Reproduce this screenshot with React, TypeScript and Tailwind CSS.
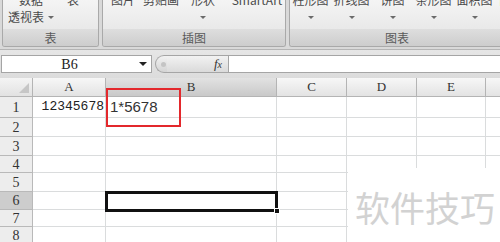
import React from 'react';

const cjk = { fontFamily: '"Noto Sans CJK SC", "Noto Sans", sans-serif' };
const serif = { fontFamily: '"Liberation Serif", "Noto Sans CJK SC", serif' };

const columns = [
  { label: 'A', w: 'w-[73px]', sel: false },
  { label: 'B', w: 'w-[171px]', sel: true },
  { label: 'C', w: 'w-[70px]', sel: false },
  { label: 'D', w: 'w-[70px]', sel: false },
  { label: 'E', w: 'w-[69px]', sel: false },
  { label: '', w: 'w-[40px]', sel: false },
];

const rows = [
  { n: 1, h: 'h-[21px]' },
  { n: 2, h: 'h-[19px]' },
  { n: 3, h: 'h-[19px]' },
  { n: 4, h: 'h-[17px]' },
  { n: 5, h: 'h-[19px]' },
  { n: 6, h: 'h-[18px]' },
  { n: 7, h: 'h-[17px]' },
  { n: 8, h: 'h-[18px]' },
];

function Arrow() {
  return <span className="inline-block w-0 h-0 border-l-[3px] border-r-[3px] border-t-[3px] border-l-transparent border-r-transparent border-t-[#6a6a6a]" />;
}

function RibbonButton({ w, top, bottom, arrow }: { w: string; top: string; bottom?: string; arrow?: boolean }) {
  return (
    <div className={`${w} flex flex-col items-center shrink-0`}>
      <div className="h-[12px] leading-[12px] -mt-[6px] whitespace-nowrap">{top}</div>
      <div className="h-[12px] mt-[5px] flex items-center gap-[4px] leading-[12px] whitespace-nowrap">
        {bottom && <span>{bottom}</span>}
        {arrow && <Arrow />}
      </div>
    </div>
  );
}

function Group({ w, label, children, last }: { w: string; label: string; children: React.ReactNode; last?: boolean }) {
  return (
    <div className={`${w} shrink-0 flex flex-col border border-t-0 border-[#a9a9a9] ${last ? 'border-r-0 rounded-bl-[3px]' : 'rounded-b-[3px]'} overflow-hidden`}>
      <div className="h-[30px] bg-gradient-to-b from-[#f4f4f4] to-[#e9e9e9] flex overflow-hidden">{children}</div>
      <div className="h-[17px] bg-gradient-to-b from-[#dedede] to-[#cdcdcd] flex items-center justify-center text-[#5a5a5a] text-[12px]">
        {label}
      </div>
    </div>
  );
}

export default function App() {
  return (
    <div className="w-[500px] h-[242px] overflow-hidden bg-white relative text-[12px] text-[#4a4a4a]" style={cjk}>
      {/* Ribbon */}
      <div className="h-[50px] bg-[#d9d9d9] flex gap-[3px] pl-[2px] pb-[2px] border-b border-[#b5b5b5]">
        <Group w="w-[97px]" label="表">
          <div className="w-[4px] shrink-0" />
          <RibbonButton w="w-[48px]" top="数据" bottom="透视表" arrow />
          <RibbonButton w="w-[36px]" top="表" />
        </Group>
        <Group w="w-[184px]" label="插图">
          <RibbonButton w="w-[40px]" top="图片" />
          <RibbonButton w="w-[36px]" top="剪贴画" />
          <RibbonButton w="w-[48px]" top="形状" arrow />
          <RibbonButton w="w-[60px]" top="SmartArt" />
        </Group>
        <div className="w-[1px] bg-white -ml-[2px] -mr-[1px]" />
        <Group w="w-[215px]" label="图表" last>
          <div className="w-[1px]" />
          <RibbonButton w="w-[41px]" top="柱形图" arrow />
          <RibbonButton w="w-[41px]" top="折线图" arrow />
          <RibbonButton w="w-[41px]" top="饼图" arrow />
          <RibbonButton w="w-[41px]" top="条形图" arrow />
          <RibbonButton w="w-[41px]" top="面积图" arrow />
          <RibbonButton w="w-[20px]" top="散" />
        </Group>
      </div>

      {/* Formula bar */}
      <div className="h-[28px] bg-gradient-to-b from-[#e6e6e6] to-[#dcdcdc] pt-[5px] pb-[5px] flex">
        <div className="w-[151px] ml-[1px] h-[18px] bg-white border border-[#a5a5a5] flex items-center relative">
          <span className="flex-1 text-center text-[14px] text-[#222] pr-[14px]" style={serif}>B6</span>
          <span className="absolute right-[4px] top-[6px] w-0 h-0 border-l-[4px] border-r-[4px] border-t-[4px] border-l-transparent border-r-transparent border-t-[#222]" />
        </div>
        <div className="w-[76px] h-[18px] flex items-center relative">
          <div className="ml-[3px] w-[12px] h-[18px] rounded-l-full border border-r-0 border-[#a5a5a5] bg-gradient-to-b from-[#f2f2f2] to-[#d4d4d4] flex items-center justify-center">
            <span className="w-[5px] h-[5px] rounded-full bg-[#c4c4c4] ml-[3px]" />
          </div>
          <div className="flex-1 h-[18px] bg-gradient-to-b from-[#f2f2f2] to-[#dadada] border-y border-[#a5a5a5] flex items-center justify-end pr-[6px]">
            <span className="italic text-[13px] text-[#333]" style={serif}>f<span className="text-[10px]">x</span></span>
          </div>
        </div>
        <div className="flex-1 h-[18px] bg-white border border-[#a5a5a5] border-r-0" />
      </div>

      {/* Grid */}
      <div className="flex flex-col" style={serif}>
        <div className="flex h-[19px]">
          <div className="w-[33px] shrink-0 bg-gradient-to-b from-[#f4f4f4] to-[#e2e2e2] border-r border-b border-[#b4b4b4] flex items-end justify-end pr-[3px] pb-[3px]">
            <span className="w-0 h-0 border-b-[10px] border-b-[#c6c6c6] border-l-[10px] border-l-transparent" />
          </div>
          {columns.map((c) => (
            <div key={c.label + c.w} className={`${c.w} shrink-0 border-r border-b border-[#b4b4b4] flex items-center justify-center text-[13px] text-[#333] ${c.sel ? 'bg-gradient-to-b from-[#e2e2e2] to-[#c9c9c9]' : 'bg-gradient-to-b from-[#f7f7f7] to-[#e3e3e3]'}`}>
              {c.label}
            </div>
          ))}
        </div>
        {rows.map((r) => (
          <div key={r.n} className={`flex ${r.h}`}>
            <div className={`w-[33px] shrink-0 border-r border-b border-[#b9b9b9] flex items-center justify-center text-[14px] text-[#333] ${r.n === 6 ? 'bg-[#cdcdcd]' : 'bg-[#ededed]'}`}>
              {r.n}
            </div>
            {columns.map((c, i) => (
              <div key={c.label + c.w} className={`${c.w} shrink-0 border-r border-b border-[#dadcdd] flex items-center text-[#222]`}>
                {r.n === 1 && i === 0 && (
                  <span className="flex-1 text-right pr-[1px] text-[13px]" style={{ fontFamily: '"Liberation Mono", monospace' }}>12345678</span>
                )}
                {r.n === 1 && i === 1 && (
                  <span className="pl-[4px] text-[15px] text-[#333]" style={{ fontFamily: '"Liberation Sans", sans-serif' }}>1*5678</span>
                )}
              </div>
            ))}
          </div>
        ))}
      </div>

      {/* Red highlight box */}
      <div className="absolute left-[106px] top-[88px] w-[75px] h-[39px] border-2 border-[#e3282c]" />

      {/* Active cell B6 */}
      <div className="absolute left-[105px] top-[191px] w-[173px] h-[21px] border-[3px] border-[#111]" />
      <div className="absolute left-[274px] top-[208px] w-[6px] h-[6px] bg-[#111] border border-white" />

      {/* Watermark */}
      <div className="absolute left-[348px] top-[168px] w-[152px] h-[74px] bg-white flex items-center justify-center pl-[2px] pt-[2px]">
        <span className="text-[35px] leading-none text-[#d2d2d2]" style={cjk}>软件技巧</span>
      </div>
    </div>
  );
}
